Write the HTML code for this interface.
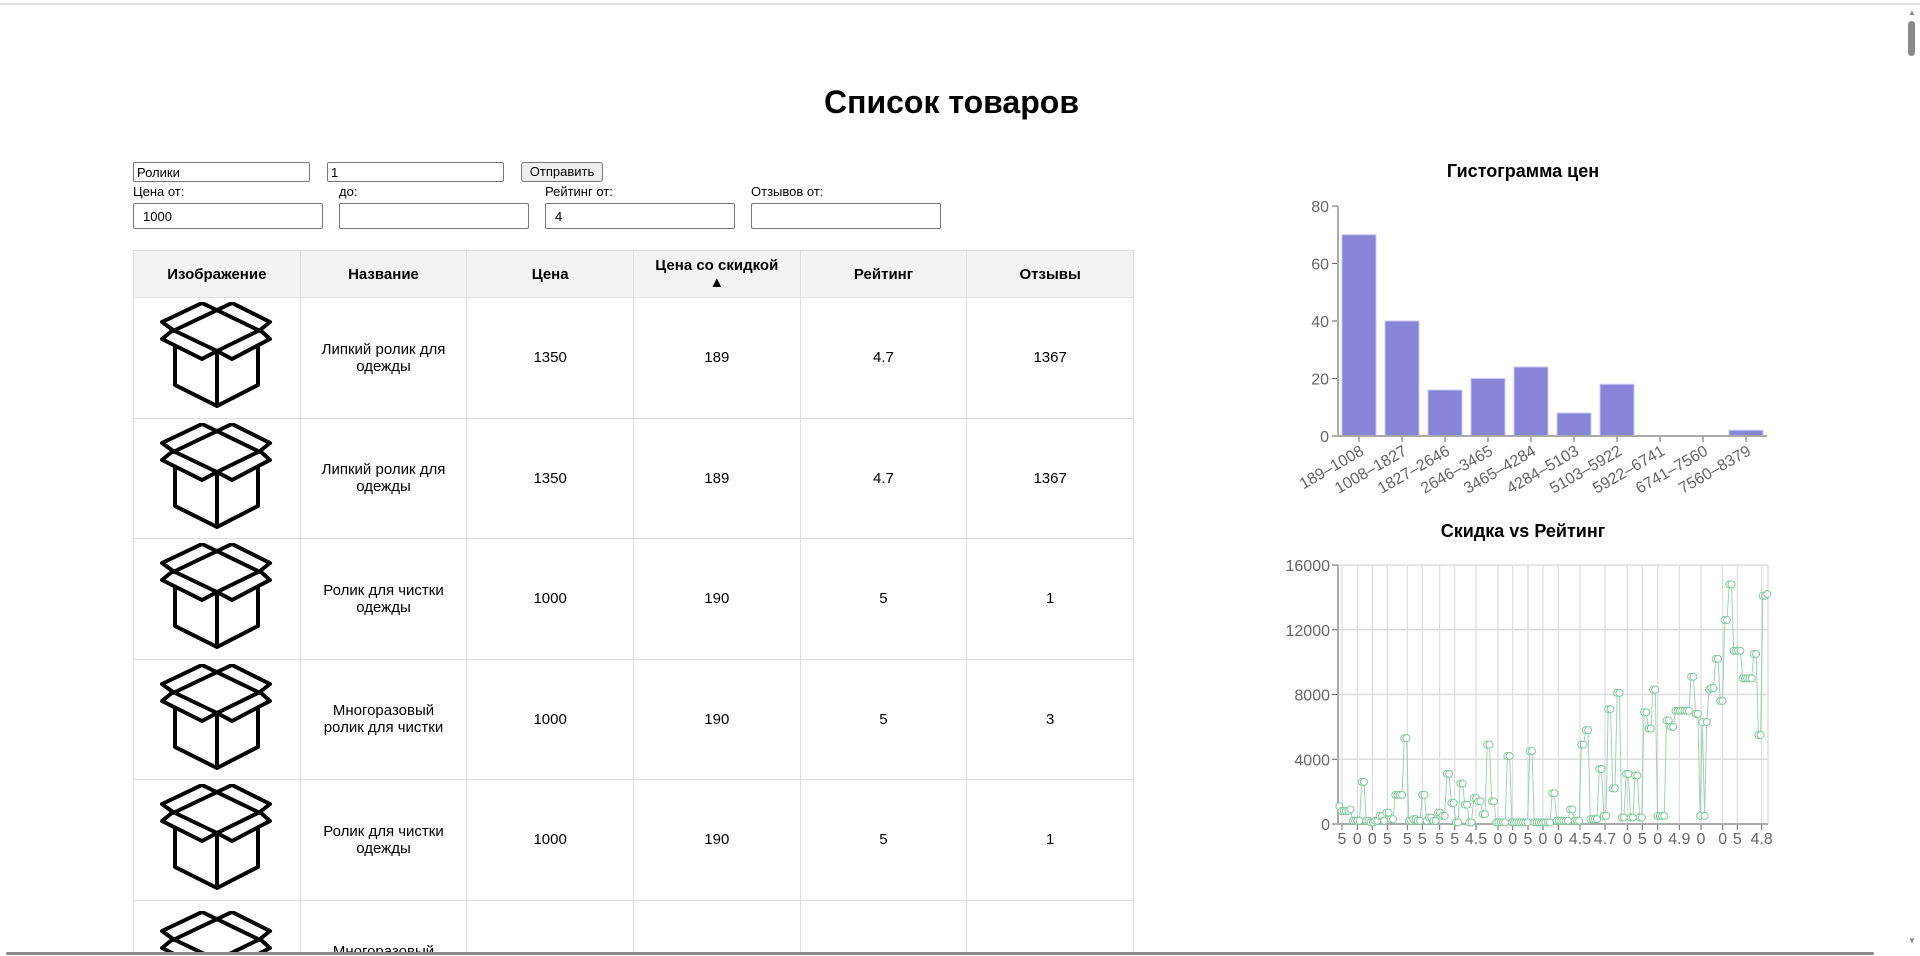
<!DOCTYPE html>
<html><head><meta charset="utf-8">
<style>
*{box-sizing:border-box}
html,body{margin:0;padding:0;width:1920px;height:956px;overflow:hidden;background:#fff;font-family:"Liberation Sans",Arial,sans-serif;color:#000}
#wrap{position:relative;width:1920px;height:956px;overflow:hidden}
.abs{position:absolute}
h1{position:absolute;left:0;width:1903px;top:84px;margin:0;text-align:center;font-size:32px;font-weight:bold}
input.i{position:absolute;border:1px solid #767676;border-radius:2px;font-family:"Liberation Sans",sans-serif;font-size:13px;padding:1px 3px;background:#fff;color:#000}
.btn{position:absolute;left:521px;top:162px;width:82px;height:20px;border:1px solid #767676;border-radius:3px;background:#efefef;font-size:13px;text-align:center;line-height:18px}
.lbl{position:absolute;top:184px;font-size:13px}
#tw{position:absolute;left:133px;top:250px;width:1010px;height:703px;overflow:hidden}
table{border-collapse:collapse;table-layout:fixed;width:1001px}
td,th{border:1px solid #ddd;text-align:center;vertical-align:middle;font-size:15px;padding:0 14px}
th{background:#f3f3f3;height:47px;font-weight:bold}
td{height:120.5px}
.tt{font-size:18px;font-weight:bold;text-anchor:middle}
.ax{font-size:16px;fill:#666}
</style></head><body><div id="wrap">
<div class="abs" style="left:0;top:3px;width:1920px;height:2px;background:#e3e3e3"></div>
<div class="abs" style="left:1908px;top:21px;width:7px;height:35px;background:#8a8a8a;border-radius:4px"></div>
<div class="abs" style="left:1908px;top:8px;font-size:8px;color:#888">▲</div>
<div class="abs" style="left:1908px;top:936px;font-size:8px;color:#888">▼</div>

<h1>Список товаров</h1>
<input class="i" style="left:133px;top:162px;width:177px;height:20px" value="Ролики">
<input class="i" style="left:327px;top:162px;width:177px;height:20px" value="1">
<div class="btn">Отправить</div>
<div class="lbl" style="left:133px">Цена от:</div>
<div class="lbl" style="left:339px">до:</div>
<div class="lbl" style="left:545px">Рейтинг от:</div>
<div class="lbl" style="left:751px">Отзывов от:</div>
<input class="i" style="left:133px;top:203px;width:190px;height:26px;padding-left:9px" value="1000">
<input class="i" style="left:339px;top:203px;width:190px;height:26px" value="">
<input class="i" style="left:545px;top:203px;width:190px;height:26px;padding-left:9px" value="4">
<input class="i" style="left:751px;top:203px;width:190px;height:26px" value="">

<svg width="0" height="0" style="position:absolute"><defs>
<g id="box" fill="none" stroke="#000" stroke-width="4" stroke-linejoin="round" stroke-linecap="round">
<path d="M2,20 L42,1 L100,29 M110,20 L72,1 L13,29 M2,20 L13,28 M110,20 L100,28 M13,28 L2,37 L42,57 L57,49 L72,57 L110,37 L100,28 M13,28 L57,49 L100,28 M15,45 L15,83 L57,104 L98,83 L98,45 M57,49 L57,104"/>
</g></defs></svg>

<div id="tw"><table>
<tr><th>Изображение</th><th>Название</th><th>Цена</th><th>Цена со скидкой<br>▲</th><th>Рейтинг</th><th>Отзывы</th></tr>
<tr><td><svg width="114" height="107" viewBox="0 0 114 107"><use href="#box"/></svg></td><td>Липкий ролик для одежды</td><td>1350</td><td>189</td><td>4.7</td><td>1367</td></tr>
<tr><td><svg width="114" height="107" viewBox="0 0 114 107"><use href="#box"/></svg></td><td>Липкий ролик для одежды</td><td>1350</td><td>189</td><td>4.7</td><td>1367</td></tr>
<tr><td><svg width="114" height="107" viewBox="0 0 114 107"><use href="#box"/></svg></td><td>Ролик для чистки одежды</td><td>1000</td><td>190</td><td>5</td><td>1</td></tr>
<tr><td><svg width="114" height="107" viewBox="0 0 114 107"><use href="#box"/></svg></td><td>Многоразовый ролик для чистки</td><td>1000</td><td>190</td><td>5</td><td>3</td></tr>
<tr><td><svg width="114" height="107" viewBox="0 0 114 107"><use href="#box"/></svg></td><td>Ролик для чистки одежды</td><td>1000</td><td>190</td><td>5</td><td>1</td></tr>
<tr><td style="height:160px;vertical-align:top;padding-top:40px"><svg width="114" height="107" viewBox="0 0 114 107" style="margin-top:-30px"><use href="#box"/></svg></td><td style="vertical-align:top;padding-top:42px">Многоразовый ролик для чистки</td><td></td><td></td><td></td><td></td></tr>
</table></div>

<svg id="ch" class="abs" style="left:0;top:0" width="1920" height="956">
<text class="tt" x="1523" y="177">Гистограмма цен</text>
<g id="hist"></g>
<text class="tt" x="1523" y="537">Скидка vs Рейтинг</text>
<g id="sc"></g>
</svg>
<div class="abs" style="left:6px;top:952px;width:1868px;height:3px;background:#8a8a8a;border-radius:2px"></div>
</div>
<script>
var NS="http://www.w3.org/2000/svg";
function el(p,t,a,txt){var e=document.createElementNS(NS,t);for(var k in a)e.setAttribute(k,a[k]);if(txt!=null)e.textContent=txt;p.appendChild(e);return e;}
var h=document.getElementById('hist');
var vals=[70,40,16,20,24,8,18,0,0,2];
var labs=["189–1008","1008–1827","1827–2646","2646–3465","3465–4284","4284–5103","5103–5922","5922–6741","6741–7560","7560–8379"];
var y0=436,k=230/80;
for(var i=0;i<10;i++){var x=1342+i*43;if(vals[i]>0)el(h,'rect',{x:x,y:y0-vals[i]*k,width:34,height:vals[i]*k,fill:'#8884d8',stroke:'#ccc9f5','stroke-width':1});
var cx=x+17;el(h,'line',{x1:cx,y1:y0,x2:cx,y2:y0+6,stroke:'#666'});
el(h,'text',{x:cx+6,y:y0+18,'text-anchor':'end',transform:'rotate(-30 '+(cx+6)+' '+(y0+18)+')',class:'ax'},labs[i]);}
[0,20,40,60,80].forEach(function(v){var y=y0-v*k;el(h,'line',{x1:1332,y1:y,x2:1338,y2:y,stroke:'#666'});el(h,'text',{x:1329,y:y+6,'text-anchor':'end',class:'ax'},v);});
el(h,'line',{x1:1338,y1:206,x2:1338,y2:436,stroke:'#aaa','stroke-width':2});
el(h,'line',{x1:1338,y1:436,x2:1767,y2:436,stroke:'#aaa','stroke-width':2});
var s=document.getElementById('sc');
var T=565,B=824,L=1338,R=1768;
var zx=[186,232,277,322,382,427,479,524,588,654,698,744,789,835,900,975,1042,1087,1133,1198,1263,1328,1372,1445];
var xl=["5","0","0","5","5","5","5","5","4.5","0","0","5","0","0","4.5","4.7","0","5","0","4.9","0","0","5","4.8"];
[0,4000,8000,12000,16000].forEach(function(v){var y=B-(B-T)*v/16000;el(s,'line',{x1:L,y1:y,x2:R,y2:y,stroke:'#ddd','stroke-width':1.5});el(s,'line',{x1:L-6,y1:y,x2:L,y2:y,stroke:'#666'});el(s,'text',{x:L-8,y:y+6,'text-anchor':'end',class:'ax'},v);});
zx.forEach(function(z,i){var x=1280+z/3;el(s,'line',{x1:x,y1:T,x2:x,y2:B,stroke:'#ddd','stroke-width':1.2});el(s,'line',{x1:x,y1:B,x2:x,y2:B+6,stroke:'#666'});el(s,'text',{x:x,y:B+20,'text-anchor':'middle',class:'ax'},xl[i]);});
el(s,'line',{x1:R,y1:T,x2:R,y2:B,stroke:'#ddd','stroke-width':1.5});
el(s,'line',{x1:L,y1:T,x2:L,y2:B,stroke:'#aaa','stroke-width':2});
el(s,'line',{x1:L,y1:B,x2:R,y2:B,stroke:'#aaa','stroke-width':2});
function rep(v,n){var a=[];for(var i=0;i<n;i++)a.push(v);return a;}
var d=[1.1,0.8,0.8,0.8,0.8,0.9,0.2,0.2,0.2,0.2,2.6,2.6,0.2,0.2,0.1,0.1,0.2,0.2,0.5,0.5,0.2,0.7,0.7,0.3,0.3,1.8,1.8,1.8,1.8,5.3,5.3,0.2,0.2,0.3,0.3,0.2,0.2,1.8,1.8,0.2,0.4,0.4,0.2,0.2,0.7,0.7,0.5,0.5,3.1,3.1,1.3,1.3,0.1,0.1,2.5,2.5,1.2,1.2,0.1,0.1,1.6,1.6,1.4,1.4,0.6,0.6,4.9,4.9,1.4,1.4]
.concat(rep(0.1,5),[4.2,4.2],rep(0.1,8),[4.5,4.5],rep(0.1,8),[1.9,1.9],rep(0.2,6),[0.9,0.9],rep(0.2,3),[4.9,4.9,5.8,5.8],rep(0.3,4),[3.4,3.4,0.5,0.5,7.1,7.1,2.2,2.2,8.1,8.1,0.4,0.4,3.1,3.1,0.4,0.4,3.0,3.0,0.4,0.4,6.9,6.9,5.9,5.9,8.3,8.3],rep(0.5,4),[6.4,6.4,6.0,6.0],rep(7.0,7),[9.1,9.1,6.8,6.8,0.5,6.3,0.5,6.3,8.3,8.4,8.4,10.2,10.2,7.6,7.6,12.6,12.6,14.8,14.8],rep(10.7,4),rep(9.0,5),[10.5,10.5,5.5,5.5,14.1,14.1,14.2]);
var x0=1280+178/3,x1=1280+1462/3,n=d.length,pts=[];
for(var i=0;i<n;i++){pts.push([x0+(x1-x0)*i/(n-1),B-(B-T)*d[i]*1000/16000]);}
el(s,'polyline',{points:pts.map(function(p){return p[0].toFixed(1)+','+p[1].toFixed(1)}).join(' '),fill:'none',stroke:'#82ca9d','stroke-width':1,'stroke-opacity':0.8});
pts.forEach(function(p){el(s,'circle',{cx:p[0],cy:p[1],r:3.5,fill:'#fff',stroke:'#82ca9d','stroke-width':1});});
</script>
</body></html>
